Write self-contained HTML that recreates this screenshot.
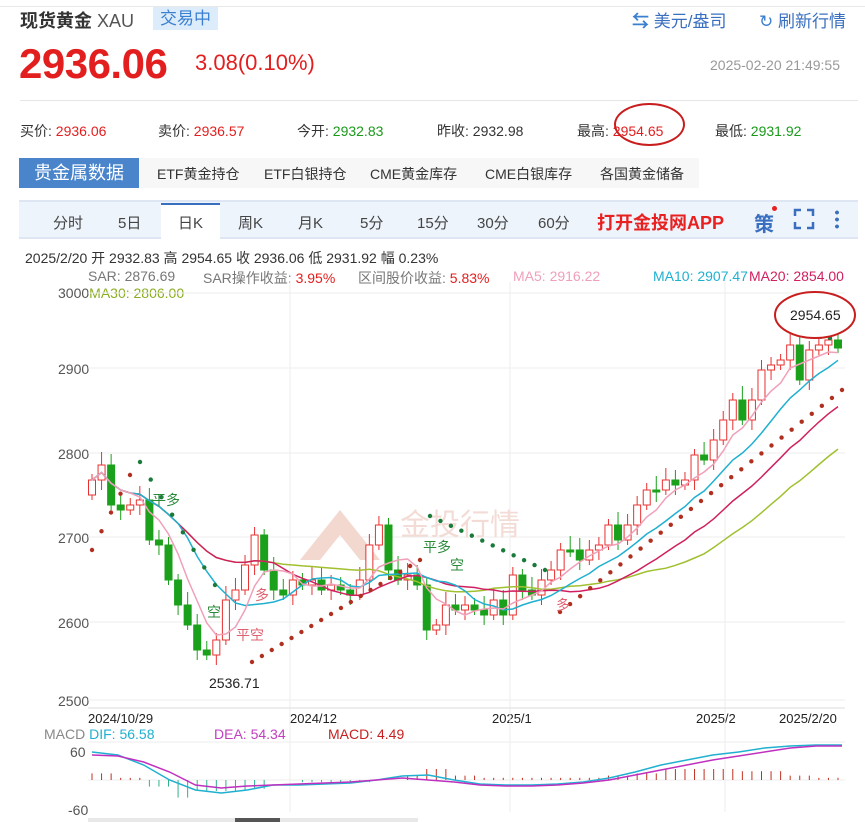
<!DOCTYPE html>
<html><head><meta charset="utf-8">
<style>
*{margin:0;padding:0;box-sizing:border-box}
body{width:865px;height:822px;overflow:hidden;background:#fff;font-family:"Liberation Sans","Noto Sans CJK SC",sans-serif;color:#333;position:relative}
.a{position:absolute;white-space:nowrap}
.t{top:212px;font-size:15px;color:#444}
.i{top:121px;font-size:14px;color:#333}
.g{top:164px;font-size:14px;color:#333}
</style></head><body>
<div class="a" style="left:0;top:6px;width:865px;border-top:1px solid #e8e8e8"></div>
<div class="a" style="left:20px;top:7px;font-size:18px;font-weight:bold;color:#333">现货黄金 <span style="font-weight:normal;color:#555">XAU</span></div>
<div class="a" style="left:153px;top:7px;width:65px;height:23px;background:#dcecfb;color:#3a7fd0;font-size:17px;line-height:23px;text-align:center">交易中</div>
<div class="a" style="left:632px;top:7px;font-size:17px;color:#3a6fc0"><b style="color:#3a7fd0">⇆</b> 美元/盎司</div>
<div class="a" style="left:759px;top:7px;font-size:17px;color:#3a6fc0"><span style="color:#3a7fd0">↻</span> 刷新行情</div>
<div class="a" style="left:19px;top:40px;font-size:42px;font-weight:bold;color:#e31e1e;letter-spacing:-0.5px">2936.06</div>
<div class="a" style="left:195px;top:50px;font-size:22px;color:#e31e1e">3.08(0.10%)</div>
<div class="a" style="left:710px;top:57px;font-size:14px;color:#999">2025-02-20 21:49:55</div>
<div class="a" style="left:20px;top:100px;width:838px;border-top:1px solid #e6e6e6"></div>
<div class="a i" style="left:20px">买价: <span style="color:#e31e1e">2936.06</span></div>
<div class="a i" style="left:158px">卖价: <span style="color:#e31e1e">2936.57</span></div>
<div class="a i" style="left:297px">今开: <span style="color:#1a9a1a">2932.83</span></div>
<div class="a i" style="left:437px">昨收: 2932.98</div>
<div class="a i" style="left:577px">最高: <span style="color:#e31e1e">2954.65</span></div>
<div class="a i" style="left:715px">最低: <span style="color:#1a9a1a">2931.92</span></div>
<div class="a" style="left:614px;top:103px;width:71px;height:43px;border:2px solid #c81e1e;border-radius:50%"></div>
<div class="a" style="left:19px;top:158px;width:120px;height:30px;background:#4a85cc;color:#fff;font-size:18px;line-height:30px;text-align:center">贵金属数据</div>
<div class="a" style="left:139px;top:158px;width:560px;height:30px;background:#f7f7f7"></div>
<div class="a g" style="left:157px">ETF黄金持仓</div>
<div class="a g" style="left:264px">ETF白银持仓</div>
<div class="a g" style="left:370px">CME黄金库存</div>
<div class="a g" style="left:485px">CME白银库存</div>
<div class="a g" style="left:600px">各国黄金储备</div>
<div class="a" style="left:19px;top:200px;width:839px;height:39px;background:#eef4fb;border-top:2px solid #dde6f2;border-bottom:2px solid #dde6f2"></div>
<div class="a" style="left:161px;top:203px;width:59px;height:36px;background:#fff;border-top:2px solid #3a6fc0"></div>
<div class="a t" style="left:53px">分时</div>
<div class="a t" style="left:118px">5日</div>
<div class="a t" style="left:178px">日K</div>
<div class="a t" style="left:238px">周K</div>
<div class="a t" style="left:298px">月K</div>
<div class="a t" style="left:360px">5分</div>
<div class="a t" style="left:417px">15分</div>
<div class="a t" style="left:477px">30分</div>
<div class="a t" style="left:538px">60分</div>
<div class="a" style="top:209px;left:597px;font-size:18px;font-weight:bold;color:#e82020">打开金投网APP</div>
<div class="a" style="top:208px;left:754px;font-size:20px;color:#3a6fc0;font-weight:bold">策</div>
<div class="a" style="top:206px;left:772px;width:5px;height:5px;border-radius:50%;background:#e82020"></div>
<svg class="a" style="left:793px;top:208px" width="22" height="22"><path d="M2 8V2h6M14 2h6v6M20 14v6h-6M8 20H2v-6" stroke="#3a6fc0" stroke-width="2.5" fill="none"/></svg>
<div class="a" style="left:835px;top:209px;width:4px;height:20px;background:radial-gradient(circle,#3a6fc0 1.8px,transparent 2px) 0 0/4px 7px"></div>
<div class="a" style="left:25px;top:248px;font-size:14px;color:#333">2025/2/20 开 2932.83 高 2954.65 收 2936.06 低 2931.92 幅 0.23%</div>
<div class="a" style="left:0;top:268px;font-size:14px;color:#777;width:865px">
<span class="a" style="left:88px">SAR: 2876.69</span>
<span class="a" style="left:203px">SAR操作收益: <span style="color:#e31e1e">3.95%</span></span>
<span class="a" style="left:358px">区间股价收益: <span style="color:#e31e1e">5.83%</span></span>
<span class="a" style="left:513px;color:#f0a0b8">MA5: 2916.22</span>
<span class="a" style="left:653px;color:#20b0d0">MA10: 2907.47</span>
<span class="a" style="left:749px;color:#d02060">MA20: 2854.00</span></div>
<div class="a" style="left:58px;top:285px;font-size:14px;color:#555">3000<span style="color:#8aad20">MA30: 2806.00</span></div>
<div class="a" style="left:58px;top:361px;font-size:14px;color:#555">2900</div>
<div class="a" style="left:58px;top:446px;font-size:14px;color:#555">2800</div>
<div class="a" style="left:58px;top:530px;font-size:14px;color:#555">2700</div>
<div class="a" style="left:58px;top:615px;font-size:14px;color:#555">2600</div>
<div class="a" style="left:58px;top:693px;font-size:14px;color:#555">2500</div>
<div class="a" style="left:88px;top:711px;font-size:13px;color:#222">2024/10/29</div>
<div class="a" style="left:290px;top:711px;font-size:13px;color:#222">2024/12</div>
<div class="a" style="left:492px;top:711px;font-size:13px;color:#222">2025/1</div>
<div class="a" style="left:696px;top:711px;font-size:13px;color:#222">2025/2</div>
<div class="a" style="left:779px;top:711px;font-size:13px;color:#222">2025/2/20</div>
<div class="a" style="left:44px;top:726px;font-size:14px;color:#888">MACD <span style="color:#20b0d0">DIF: 56.58</span></div>
<div class="a" style="left:214px;top:726px;font-size:14px;color:#c040c0">DEA: 54.34</div>
<div class="a" style="left:328px;top:726px;font-size:14px;color:#c82020">MACD: 4.49</div>
<div class="a" style="left:70px;top:744px;font-size:14px;color:#555">60</div>
<div class="a" style="left:68px;top:802px;font-size:14px;color:#555">-60</div>
<svg id="c" class="a" style="left:0;top:0" width="865" height="822"></svg>
<script>
var s='';
function L(x1,y1,x2,y2,c,w){s+='<line x1="'+x1+'" y1="'+y1+'" x2="'+x2+'" y2="'+y2+'" stroke="'+c+'" stroke-width="'+(w||1)+'"/>';}
[293,368,453,537,622,700].forEach(function(y){L(88,y,845,y,'#eee')});
[290,510,725].forEach(function(x){L(x,282,x,812,'#eee')});
L(88,708,845,708,'#ddd');L(88,742,845,742,'#eee');L(88,780,845,780,'#eee');
s+='<path d="M300 560 L340 510 L380 560 L360 560 L340 535 L320 560Z" fill="#f3d8d0"/><text x="400" y="535" font-size="30" fill="#f4dcd6" font-family="Liberation Sans,Noto Sans CJK SC,sans-serif">金投行情</text>';
var c=[480,465,505,510,505,500,540,545,580,605,625,650,655,640,600,590,565,535,570,590,595,580,585,580,590,585,590,595,580,545,525,570,580,575,585,630,625,605,610,605,610,615,600,615,575,590,595,580,570,550,550,560,550,545,525,540,525,505,490,490,480,485,480,455,460,440,420,400,420,400,370,365,360,345,380,350,345,340,348];
var n=c.length,st=(838-92)/(n-1),xs=[];
for(var i=0;i<n;i++){xs.push(92+i*st);}
for(var i=0;i<n;i++){var o=i?c[i-1]:495,cl=c[i],x=xs[i],up=cl<o,col=up?'#e83030':'#1aa01a';
var t=Math.min(o,cl),b=Math.max(o,cl);if(b-t<2)b=t+2;var h=t-6-(i*7%9),lo=b+5+(i*5%10);
L(x,h,x,lo,col);
s+='<rect x="'+(x-3.5)+'" y="'+t+'" width="7" height="'+(b-t)+'" fill="'+(up?'#fff':col)+'" stroke="'+col+'"/>';}
function ma(p,col){var pts=[];for(var i=0;i<n;i++){var a=0,k=0;for(var j=Math.max(0,i-p+1);j<=i;j++){a+=c[j];k++;}pts.push(xs[i].toFixed(1)+','+(a/k).toFixed(1));}s+='<polyline points="'+pts.join(' ')+'" fill="none" stroke="'+col+'" stroke-width="1.5"/>';}
ma(30,'#a0c030');ma(20,'#d02060');ma(10,'#20b0d0');ma(5,'#f0a0b8');
function dots(x1,y1,x2,y2,k,col,cv){for(var i=0;i<k;i++){var t=i/(k-1),x=x1+(x2-x1)*t,y=y1+(y2-y1)*(cv?t*t:t);s+='<circle cx="'+x+'" cy="'+y+'" r="2.2" fill="'+col+'"/>';}}
dots(92,550,130,475,5,'#b03020');
dots(140,462,215,585,8,'#1a7a3a',0);
dots(252,662,420,560,18,'#b03020');
dots(430,516,545,570,12,'#1a7a3a');
dots(560,612,842,390,29,'#b03020',0);
dots(793,333,830,338,5,'#1a7a3a');
s+='<text x="209" y="688" font-size="14" fill="#222" font-family="Liberation Sans">2536.71</text>';
s+='<ellipse cx="815" cy="315" rx="40" ry="23" fill="#fff" stroke="#c81e1e" stroke-width="2"/><text x="790" y="320" font-size="14" fill="#222" font-family="Liberation Sans">2954.65</text>';
var f='font-family="Liberation Sans,Noto Sans CJK SC,sans-serif" font-size="14"';
s+='<text x="152" y="505" '+f+' fill="#2a8a3a">平多</text><text x="207" y="617" '+f+' fill="#2a8a3a">空</text><text x="236" y="640" '+f+' fill="#e06070">平空</text><text x="255" y="600" '+f+' fill="#e06070">多</text><text x="423" y="552" '+f+' fill="#2a8a3a">平多</text><text x="450" y="570" '+f+' fill="#2a8a3a">空</text><text x="556" y="610" '+f+' fill="#e06070">多</text>';
var dif=[],dea=[];
var dv=[752,755,765,780,790,793,790,785,785,784,783,780,776,775,780,784,785,785,784,782,778,772,765,760,755,752,748,746,745,745];
var ev=[755,756,762,772,785,788,786,785,784,783,782,780,778,780,782,785,786,786,785,783,780,775,770,765,760,756,752,748,746,746];
for(var i=0;i<dv.length;i++){var x=(92+i*(750/29)).toFixed(1);dif.push(x+','+dv[i]);dea.push(x+','+ev[i]);}
for(var i=0;i<n;i++){var k=Math.floor(i/(n-1)*29),h=(ev[k]-dv[k])*2.2;var col=h>0?'#c03020':'#30b090';L(xs[i],780,xs[i],780-h,col);}
s+='<polyline points="'+dif.join(' ')+'" fill="none" stroke="#20b0d0" stroke-width="1.5"/><polyline points="'+dea.join(' ')+'" fill="none" stroke="#c030c0" stroke-width="1.5"/>';
s+='<rect x="88" y="818" width="330" height="4" fill="#e8e8e8"/><rect x="235" y="818" width="45" height="4" fill="#555"/>';
document.getElementById('c').innerHTML=s;
</script>
</body></html>
